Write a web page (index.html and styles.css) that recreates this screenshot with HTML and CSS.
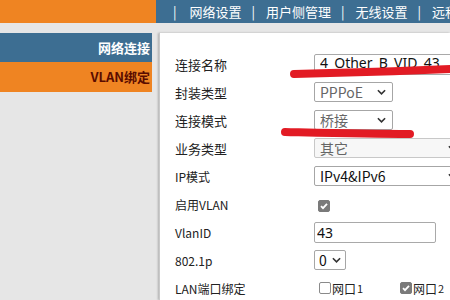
FILE: index.html
```html
<!DOCTYPE html>
<html lang="zh-CN">
<head>
  <meta charset="UTF-8" />
  <title>网络设置</title>
  <link rel="stylesheet" href="styles.css">
</head>
<body>
  <div class="top">
    <div class="brand"></div>
    <nav class="nav">
      <span class="sep">|</span><span>网络设置</span>
      <span class="sep">|</span><span>用户侧管理</span>
      <span class="sep">|</span><span>无线设置</span>
      <span class="sep">|</span><span>远程管理</span>
    </nav>
  </div>
  <div class="strip"></div>

  <div class="page">
    <aside class="side">
      <div class="side-item active">网络连接</div>
      <div class="side-item sub">VLAN绑定</div>
    </aside>

    <main class="main">
      <div class="form">
        <label>连接名称</label>
        <div><input class="text wide" type="text" value="4_Other_B_VID_43"></div>

        <label>封装类型</label>
        <div><div class="select short muted">PPPoE<svg viewBox="0 0 10 6"><path d="M1 1l4 4 4-4"/></svg></div></div>

        <label>连接模式</label>
        <div><div class="select short muted">桥接<svg viewBox="0 0 10 6"><path d="M1 1l4 4 4-4"/></svg></div></div>

        <label>业务类型</label>
        <div><div class="select long muted dis">其它<svg viewBox="0 0 10 6"><path d="M1 1l4 4 4-4"/></svg></div></div>

        <label class="mono">IP模式</label>
        <div><div class="select long">IPv4&amp;IPv6<svg viewBox="0 0 10 6"><path d="M1 1l4 4 4-4"/></svg></div></div>

        <label class="mono">启用VLAN</label>
        <div><span class="check on"><svg viewBox="0 0 10 10"><path d="M2 5.2l2 2 4-4.4"/></svg></span></div>

        <label class="mono">VlanID</label>
        <div><input class="text mid" type="text" value="43"></div>

        <label class="mono">802.1p</label>
        <div><div class="select tiny">0<svg viewBox="0 0 10 6"><path d="M1 1l4 4 4-4"/></svg></div></div>

        <label class="mono">LAN端口绑定</label>
        <div class="ports">
          <span class="port"><span class="check"></span>网口<small>1</small></span>
          <span class="port"><span class="check on"><svg viewBox="0 0 10 10"><path d="M2 5.2l2 2 4-4.4"/></svg></span>网口<small>2</small></span>
        </div>
      </div>
    </main>
  </div>

  <!-- red pen marks drawn over the screenshot -->
  <svg class="marks" viewBox="0 0 450 300">
    <path d="M294 74 C340 73 400 71 452 69"/>
    <path d="M285 132 C330 133 370 134 410 134"/>
  </svg>
</body>
</html>
```

FILE: styles.css
```css
body { margin: 0; background: #e6e6e6; font-family: "Noto Sans CJK SC", "Noto Sans", sans-serif; font-size: 13px; color: #222; width: 450px; height: 300px; overflow: hidden; position: relative; }

.top { display: flex; height: 23px; }
.brand { width: 156px; flex-shrink: 0; background: #ef8422; }
.nav { flex: 1; min-width: 0; background: #3d6e92; color: #fff; display: flex; align-items: center; white-space: nowrap; font-size: 13px; overflow: hidden; padding-left: 17px; }
.nav .sep { margin-right: 11px; margin-left: 10px; }
.nav .sep:first-child { margin-left: 0; margin-right: 13px; }

.strip { height: 10px; background: #e6e6e6; }

.page { display: flex; gap: 7px; height: 267px; }
.side { width: 152px; flex-shrink: 0; }
.side-item { height: 29px; line-height: 29px; text-align: right; padding-right: 2px; font-weight: bold; font-size: 13px; }
.side-item.active { background: #3d6e92; color: #fff; }
.side-item.sub { background: #ef8422; color: #5a0c00; height: 30px; line-height: 30px; }

.main { flex: 1; min-width: 0; overflow: hidden; background: #fff; border-left: 1px solid #c9c9c9; box-shadow: -1px 0 2px rgba(0,0,0,0.25); padding: 17px 0 0 15px; }

.form { display: grid; grid-template-columns: 139px 160px; grid-auto-rows: 28px; align-items: center; }
.form label { color: #222; }
.form label.mono { font-size: 12px; }

.text { box-sizing: border-box; height: 21px; border: 1px solid #a9a9a9; border-radius: 2px; padding: 0 5px 3px; font: 14px "Noto Sans", "DejaVu Sans", sans-serif; color: #111; outline: none; }
.text.wide { width: 150px; }
.text.mid { width: 122px; padding: 0 2px; }

.select { box-sizing: border-box; height: 20px; border: 1px solid #a6a6a6; border-radius: 2px; display: flex; align-items: center; justify-content: space-between; padding: 0 6px 0 5px; font-size: 14px; color: #111; background: #fff; }
.select svg { width: 9px; height: 6px; fill: none; stroke: #333; stroke-width: 1.8; }
.select.short { width: 79px; }
.select.long { width: 150px; }
.select.tiny { width: 32px; padding: 0 4px; }
.select.muted { color: #666; }
.select.dis { background: #f7f7f7; border-color: #c8c8c8; }

.check { display: inline-flex; width: 12px; height: 12px; border: 1px solid #8a8a8a; border-radius: 2px; box-sizing: border-box; background: #fff; vertical-align: middle; }
.check.on { background: #7a7a7a; border-color: #7a7a7a; align-items: center; justify-content: center; }
.check svg { width: 10px; height: 10px; fill: none; stroke: #fff; stroke-width: 1.8; }
.form > div > .check { margin-left: 4px; }

.ports { display: flex; font-size: 12px; }
.port { display: inline-flex; align-items: center; gap: 1px; width: 81px; flex-shrink: 0; }
.port:first-child { margin-left: 5px; }
.port small { font-size: 11px; }

.marks { position: absolute; left: 0; top: 0; width: 450px; height: 300px; pointer-events: none; }
.marks path { fill: none; stroke: #e21b24; stroke-width: 8; stroke-linecap: round; }
```
